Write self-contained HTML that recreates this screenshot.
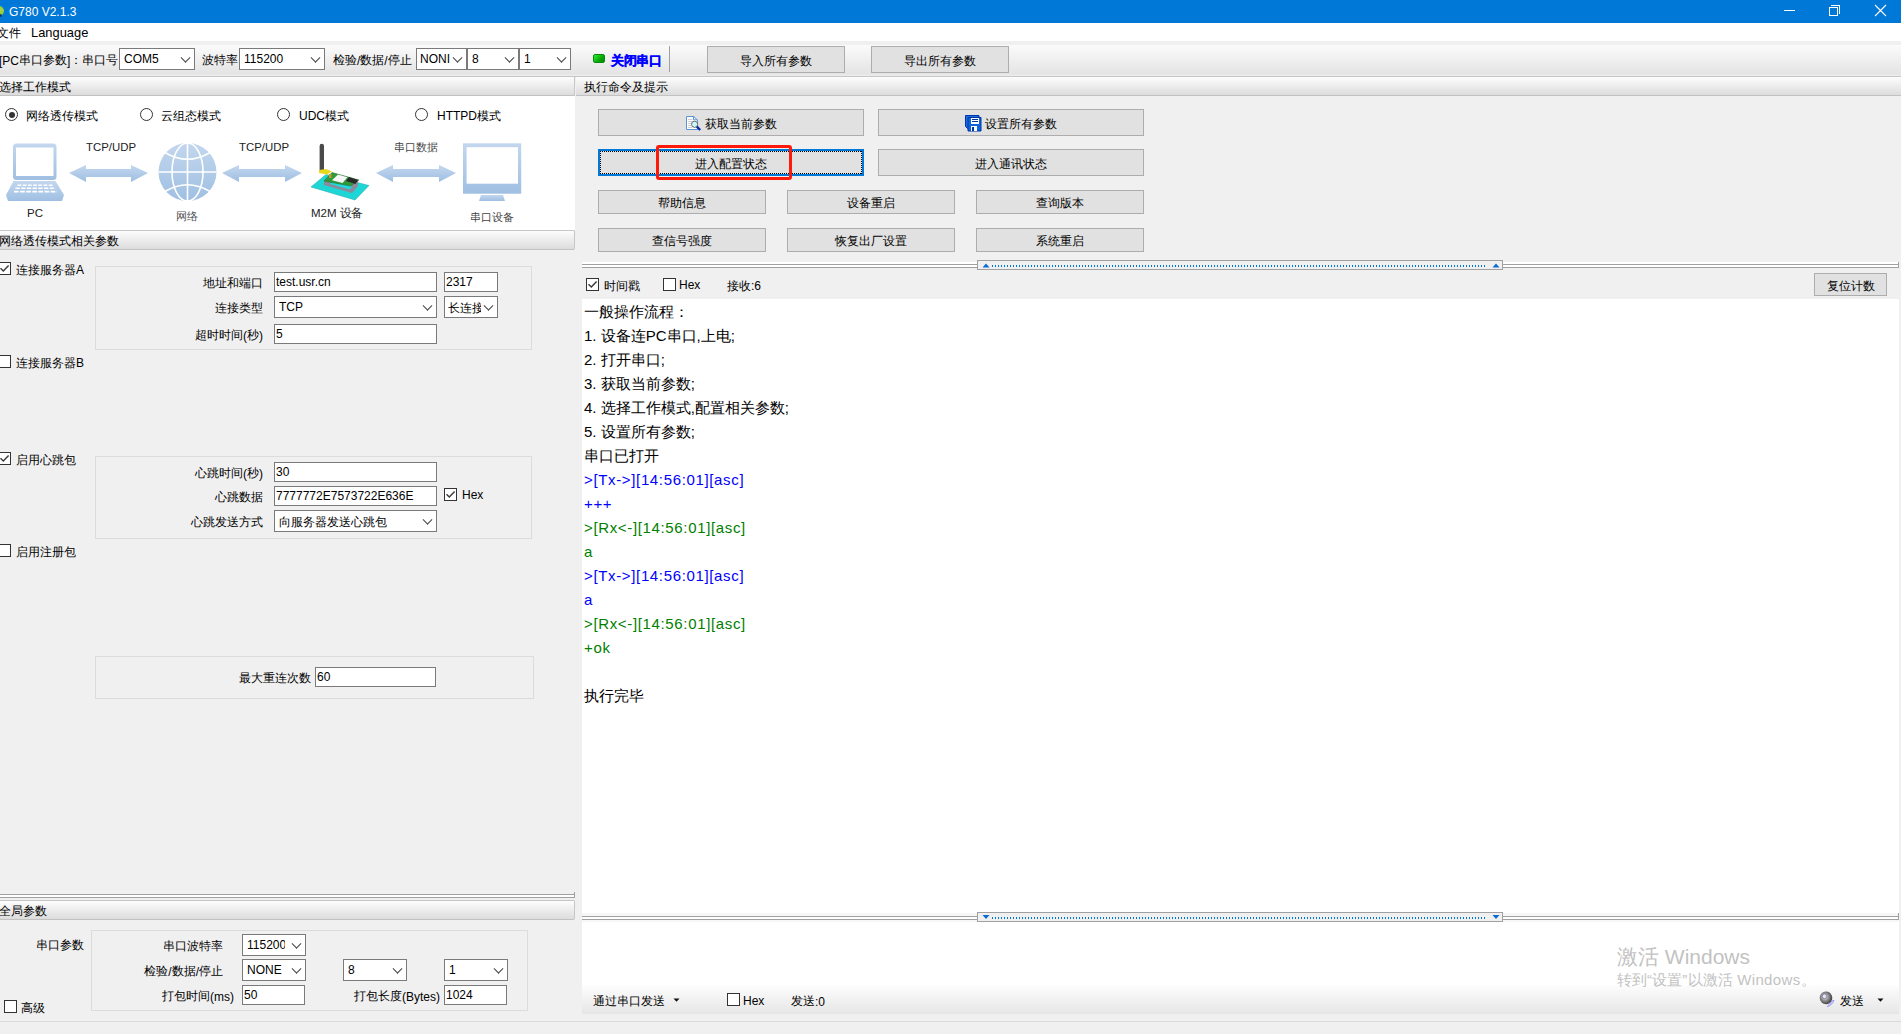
<!DOCTYPE html>
<html><head><meta charset="utf-8">
<style>
*{margin:0;padding:0;box-sizing:border-box}
html,body{width:1901px;height:1034px;overflow:hidden;background:#f0f0f0;font-family:"Liberation Sans",sans-serif;font-size:12px;color:#000}
.a{position:absolute}
.t{position:absolute;white-space:nowrap;line-height:1}
.hdr{position:absolute;height:20px;background:linear-gradient(#fdfdfd,#dcdcdc);border-top:1px solid #c6c6c6;border-bottom:1px solid #c2c2c2;line-height:20px;white-space:nowrap;overflow:hidden}
.btn{position:absolute;background:#e1e1e1;border:1px solid #adadad;padding-top:3px;display:flex;align-items:center;justify-content:center;white-space:nowrap;font-size:12px}
.inp{position:absolute;background:#fff;border:1px solid #7a7a7a;display:flex;align-items:center;padding-left:1px;white-space:nowrap;overflow:hidden;font-size:12px}
.cmb{position:absolute;background:#fff;border:1px solid #7a7a7a;display:flex;align-items:center;padding-left:4px;white-space:nowrap;overflow:hidden;font-size:12px}
.cmb::after{content:"";position:absolute;right:5px;top:50%;width:6px;height:6px;border-right:1.1px solid #444;border-bottom:1.1px solid #444;transform:translateY(-68%) rotate(45deg)}
.chk{position:absolute;width:13px;height:13px;border:1px solid #333;background:#fff}

.rad{position:absolute;width:13px;height:13px;border:1px solid #333;border-radius:50%;background:#fff}
.rad.on::after{content:"";position:absolute;left:2.5px;top:2.5px;width:6px;height:6px;border-radius:50%;background:#333}
.grp{position:absolute;border:1px solid #dcdcdc}
.lbl{position:absolute;white-space:nowrap;padding-top:3px;display:flex;align-items:center;font-size:12px}
.r{justify-content:flex-end}
.txt{position:absolute;left:584px;margin-top:1px;white-space:nowrap;font-size:15px;height:24px;line-height:24px}
.lat{font-size:15px}
.log{letter-spacing:0.65px}
.blue{color:#0000ff}
.green{color:#008000}
i{display:inline-block;width:1em;text-align:center;font-style:normal}
.tofu i{transform:scale(1.4,1.3)}
</style></head><body>

<!-- title bar -->
<div class="a" style="left:0;top:0;width:1901px;height:23px;background:#0078d7"></div>
<div class="a" style="left:-6px;top:6px;width:10px;height:10px;border-radius:50%;background:radial-gradient(circle at 70% 40%,#a6d84a,#6ab814)"></div><div class="a" style="left:-2px;top:14px;width:4px;height:3px;border-radius:50%;background:#0a3a6a"></div>
<div class="t" style="left:9px;top:6px;color:#fff;font-size:12px">G780 V2.1.3</div>
<div class="a" style="left:1784px;top:10px;width:11px;height:1px;background:#fff"></div>
<div class="a" style="left:1829px;top:7px;width:9px;height:9px;border:1px solid #fff"></div>
<div class="a" style="left:1831px;top:5px;width:9px;height:9px;border-top:1px solid #fff;border-right:1px solid #fff"></div>
<svg class="a" style="left:1874px;top:4px" width="13" height="13"><path d="M1 1L12 12M12 1L1 12" stroke="#fff" stroke-width="1.1"/></svg>

<!-- menu bar -->
<div class="a" style="left:0;top:23px;width:1901px;height:18px;background:#fff"></div>
<div class="t" style="left:-3px;top:27px;font-size:12px"><i>文</i><i>件</i></div>
<div class="t" style="left:31px;top:27px;font-size:12.9px">Language</div>

<!-- toolbar -->
<div class="a" style="left:0;top:45px;width:1901px;height:31px;background:linear-gradient(#fbfbfb,#e4e4e4 93%,#efefef)"></div>

<div class="lbl" style="left:-1px;top:48px;height:22px">[PC<i>串</i><i>口</i><i>参</i><i>数</i>]<i>：</i><i>串</i><i>口</i><i>号</i></div>
<div class="cmb" style="left:119px;top:48px;width:76px;height:22px">COM5</div>
<div class="lbl" style="left:202px;top:48px;height:22px"><i>波</i><i>特</i><i>率</i></div>
<div class="cmb" style="left:239px;top:48px;width:86px;height:22px">115200</div>
<div class="lbl" style="left:333px;top:48px;height:22px"><i>检</i><i>验</i>/<i>数</i><i>据</i>/<i>停</i><i>止</i></div>
<div class="cmb" style="left:416px;top:48px;width:51px;height:22px;padding-left:3px">NONI</div>
<div class="cmb" style="left:467px;top:48px;width:52px;height:22px">8</div>
<div class="cmb" style="left:519px;top:48px;width:52px;height:22px">1</div>
<div class="a" style="left:593px;top:54px;width:12px;height:9px;border-radius:2px;background:linear-gradient(135deg,#30f030,#08a808 60%,#068a06);border:1px solid #0a8a0a"></div>
<div class="lbl" style="left:611px;top:48px;height:22px;padding-top:5px;color:#0000ff;font-weight:bold;font-size:12.5px;letter-spacing:0.4px;-webkit-text-stroke:0.35px #0000ff"><i>关</i><i>闭</i><i>串</i><i>口</i></div>
<div class="a" style="left:669px;top:46px;width:1px;height:26px;background:#a0a0a0"></div>
<div class="btn" style="left:707px;top:46px;width:138px;height:27px"><i>导</i><i>入</i><i>所</i><i>有</i><i>参</i><i>数</i></div>
<div class="btn" style="left:871px;top:46px;width:138px;height:27px"><i>导</i><i>出</i><i>所</i><i>有</i><i>参</i><i>数</i></div>

<!-- headers -->
<div class="a" style="left:0;top:76px;width:1901px;height:1px;background:#c6c6c6"></div>
<div class="hdr" style="left:-2px;top:76px;width:577px;padding-left:1px;border-right:1px solid #c6c6c6"><i>选</i><i>择</i><i>工</i><i>作</i><i>模</i><i>式</i></div>
<div class="hdr" style="left:576px;top:76px;width:1325px;padding-left:8px"><i>执</i><i>行</i><i>命</i><i>令</i><i>及</i><i>提</i><i>示</i></div>

<!-- left top white panel -->
<div class="a" style="left:0;top:96px;width:575px;height:134px;background:#fff"></div>
<div class="rad on" style="left:5px;top:108px"></div>
<div class="lbl" style="left:26px;top:105px;height:19px"><i>网</i><i>络</i><i>透</i><i>传</i><i>模</i><i>式</i></div>
<div class="rad" style="left:140px;top:108px"></div>
<div class="lbl" style="left:161px;top:105px;height:19px"><i>云</i><i>组</i><i>态</i><i>模</i><i>式</i></div>
<div class="rad" style="left:277px;top:108px"></div>
<div class="lbl" style="left:299px;top:105px;height:19px">UDC<i>模</i><i>式</i></div>
<div class="rad" style="left:415px;top:108px"></div>
<div class="lbl" style="left:437px;top:105px;height:19px">HTTPD<i>模</i><i>式</i></div>

<!-- diagram -->
<svg class="a" style="left:0;top:130px" width="575" height="100" viewBox="0 130 575 100">
 <defs>
  <linearGradient id="bl" x1="0" y1="0" x2="0" y2="1"><stop offset="0" stop-color="#c3d7ee"/><stop offset="1" stop-color="#9fbfe2"/></linearGradient>
 </defs>
 <!-- laptop -->
 <rect x="13" y="143.5" width="43.5" height="36.5" rx="3.5" fill="url(#bl)"/>
 <rect x="16" y="147.5" width="37.5" height="28.5" fill="#fff"/>
 <rect x="18" y="180" width="3" height="1" fill="#fff"/><rect x="23" y="180" width="23" height="1" fill="#fff"/><rect x="48" y="180" width="3" height="1" fill="#fff"/>
 <path d="M13.5 181 L55.5 181 L64 195 L62 201 L8 201 L6 195 Z" fill="url(#bl)"/>
 <g stroke="#fff" stroke-width="1.6">
  <path d="M17.5 185.3 H53.5" stroke-dasharray="3.8 1.4"/>
  <path d="M15.5 188.3 H55.5" stroke-dasharray="4.3 1.4"/>
  <path d="M14 191.6 H57" stroke-dasharray="4.7 1.4"/>
 </g>
 <!-- arrows -->
 <path id="arr" d="M69 173 L86 165 L86 169 L131 169 L131 165 L148 173 L131 182 L131 177 L86 177 L86 182 Z" fill="url(#bl)"/>
 <path d="M222 173 L239 165 L239 169 L285 169 L285 165 L302 173 L285 182 L285 177 L239 177 L239 182 Z" fill="url(#bl)"/>
 <path d="M376 173 L393 165 L393 169 L439 169 L439 165 L456 173 L439 182 L439 177 L393 177 L393 182 Z" fill="url(#bl)"/>
 <!-- globe -->
 <circle cx="187.5" cy="172" r="29" fill="url(#bl)"/>
 <g stroke="#fff" stroke-width="1.6" fill="none">
  <line x1="187.5" y1="143" x2="187.5" y2="201"/>
  <line x1="158.5" y1="172" x2="216.5" y2="172"/>
  <ellipse cx="187.5" cy="172" rx="15.5" ry="29"/>
  <path d="M165 152.5 Q187.5 166 210 152.5"/>
  <path d="M165 191.5 Q187.5 178 210 191.5"/>
 </g>
 <!-- M2M device -->
 <path d="M311 187 L326 174.5 L369 185.5 L355 200 Z" fill="#1fd6d6" stroke="#17a8a8" stroke-width="0.5"/>
 <path d="M324 181 L324 185 L352 193 L358 186 L358 181 Z" fill="#8a8a9a"/>
 <path d="M330 184 L350 189.5 L352 186 L332 180.5 Z" fill="#20d8e0"/>
 <path d="M324 181 L332 172.5 L359 180 L350.5 186 Z" fill="#2e9a3a" stroke="#1d6a24" stroke-width="0.5"/>
 <path d="M332 180.3 L338 174.6 L347.4 177.2 L342.6 182.9 Z" fill="#f6f6f6"/>
 <path d="M346 181 L349 177 L358 180 L355.5 184 Z" fill="#2a2a2a"/>
 <rect x="319.6" y="143.7" width="4.4" height="28" rx="2.2" fill="#4a4a4a"/>
 <path d="M319 170 L326 169 L332 171.5 L327 174.5 L319 173 Z" fill="#e8d81c"/>
 <rect x="329" y="174" width="2.5" height="4" fill="#c8962a"/>
 <!-- monitor -->
 <rect x="463" y="143.3" width="58.2" height="50.4" fill="url(#bl)"/>
 <rect x="466.6" y="147.2" width="51.4" height="36.5" fill="#fff"/>
 <path d="M481 195 L503 195 L505 201 L479 201 Z" fill="url(#bl)"/>
</svg>
<div class="t" style="left:86px;top:142px;font-size:11.4px;color:#222">TCP/UDP</div>
<div class="t" style="left:239px;top:142px;font-size:11.4px;color:#222">TCP/UDP</div>
<div class="t" style="left:394px;top:142px;font-size:11px;color:#444;letter-spacing:0.6px"><i>串</i><i>口</i><i>数</i><i>据</i></div>
<div class="t" style="left:27px;top:208px;font-size:11.5px;color:#222">PC</div>
<div class="t" style="left:176px;top:211px;font-size:11px;color:#555"><i>网</i><i>络</i></div>
<div class="t" style="left:311px;top:208px;font-size:11.5px;color:#222">M2M <i>设</i><i>备</i></div>
<div class="t" style="left:470px;top:212px;font-size:11px;color:#444;letter-spacing:0.8px"><i>串</i><i>口</i><i>设</i><i>备</i></div>

<div class="hdr" style="left:-2px;top:230px;width:577px;padding-left:1px;border-right:1px solid #c6c6c6;border-radius:0 2px 2px 0"><i>网</i><i>络</i><i>透</i><i>传</i><i>模</i><i>式</i><i>相</i><i>关</i><i>参</i><i>数</i></div>

<!-- server A -->
<div class="chk on" style="left:-2px;top:262px"><svg width="11" height="11" style="position:absolute;left:0;top:0"><path d="M1.5 5.2L4.3 8L9.6 2.4" fill="none" stroke="#3c3c3c" stroke-width="1.45"/></svg></div>
<div class="lbl" style="left:16px;top:259px;height:19px"><i>连</i><i>接</i><i>服</i><i>务</i><i>器</i>A</div>
<div class="grp" style="left:95px;top:266px;width:437px;height:84px"></div>
<div class="lbl r" style="left:150px;top:272px;width:113px;height:20px"><i>地</i><i>址</i><i>和</i><i>端</i><i>口</i></div>
<div class="inp" style="left:274px;top:272px;width:163px;height:20px">test.usr.cn</div>
<div class="inp" style="left:444px;top:272px;width:54px;height:20px">2317</div>
<div class="lbl r" style="left:150px;top:296px;width:113px;height:22px"><i>连</i><i>接</i><i>类</i><i>型</i></div>
<div class="cmb" style="left:274px;top:296px;width:163px;height:22px">TCP</div>
<div class="cmb" style="left:444px;top:296px;width:54px;height:22px;padding-left:3px;padding-top:3px"><span style="display:inline-block;width:33px;overflow:hidden;white-space:nowrap"><i>长</i><i>连</i><i>接</i></span></div>
<div class="lbl r" style="left:150px;top:324px;width:113px;height:20px"><i>超</i><i>时</i><i>时</i><i>间</i>(<i>秒</i>)</div>
<div class="inp" style="left:274px;top:324px;width:163px;height:20px">5</div>

<div class="chk" style="left:-2px;top:355px"></div>
<div class="lbl" style="left:16px;top:352px;height:19px"><i>连</i><i>接</i><i>服</i><i>务</i><i>器</i>B</div>

<!-- heartbeat -->
<div class="chk on" style="left:-2px;top:452px"><svg width="11" height="11" style="position:absolute;left:0;top:0"><path d="M1.5 5.2L4.3 8L9.6 2.4" fill="none" stroke="#3c3c3c" stroke-width="1.45"/></svg></div>
<div class="lbl" style="left:16px;top:449px;height:19px"><i>启</i><i>用</i><i>心</i><i>跳</i><i>包</i></div>
<div class="grp" style="left:95px;top:456px;width:437px;height:83px"></div>
<div class="lbl r" style="left:150px;top:462px;width:113px;height:20px"><i>心</i><i>跳</i><i>时</i><i>间</i>(<i>秒</i>)</div>
<div class="inp" style="left:274px;top:462px;width:163px;height:20px">30</div>
<div class="lbl r" style="left:150px;top:486px;width:113px;height:20px"><i>心</i><i>跳</i><i>数</i><i>据</i></div>
<div class="inp" style="left:274px;top:486px;width:163px;height:20px">7777772E7573722E636E</div>
<div class="chk on" style="left:444px;top:488px"><svg width="11" height="11" style="position:absolute;left:0;top:0"><path d="M1.5 5.2L4.3 8L9.6 2.4" fill="none" stroke="#3c3c3c" stroke-width="1.45"/></svg></div>
<div class="lbl" style="left:462px;top:485px;height:19px;padding-top:1px">Hex</div>
<div class="lbl r" style="left:150px;top:510px;width:113px;height:22px"><i>心</i><i>跳</i><i>发</i><i>送</i><i>方</i><i>式</i></div>
<div class="cmb" style="left:274px;top:510px;width:163px;height:22px;padding-top:3px"><i>向</i><i>服</i><i>务</i><i>器</i><i>发</i><i>送</i><i>心</i><i>跳</i><i>包</i></div>

<div class="chk" style="left:-2px;top:544px"></div>
<div class="lbl" style="left:16px;top:541px;height:19px"><i>启</i><i>用</i><i>注</i><i>册</i><i>包</i></div>

<div class="grp" style="left:95px;top:656px;width:439px;height:43px"></div>
<div class="lbl r" style="left:200px;top:667px;width:111px;height:20px"><i>最</i><i>大</i><i>重</i><i>连</i><i>次</i><i>数</i></div>
<div class="inp" style="left:315px;top:667px;width:121px;height:20px">60</div>

<!-- left splitter -->
<div class="a" style="left:0;top:892px;width:575px;height:6px;background:#fff;border-top:2px solid #f0f0f0"></div>
<div class="a" style="left:0;top:894px;width:575px;height:1px;background:#a0a0a0"></div>
<div class="a" style="left:0;top:897px;width:575px;height:1px;background:#a0a0a0"></div>
<div class="a" style="left:574px;top:892px;width:1px;height:6px;background:#a0a0a0"></div>

<div class="hdr" style="left:-2px;top:900px;width:577px;padding-left:1px;border-right:1px solid #c6c6c6;border-radius:0 2px 2px 0"><i>全</i><i>局</i><i>参</i><i>数</i></div>

<!-- global -->
<div class="lbl" style="left:36px;top:934px;height:20px"><i>串</i><i>口</i><i>参</i><i>数</i></div>
<div class="grp" style="left:91px;top:930px;width:437px;height:81px"></div>
<div class="lbl r" style="left:110px;top:934px;width:113px;height:22px"><i>串</i><i>口</i><i>波</i><i>特</i><i>率</i></div>
<div class="cmb" style="left:242px;top:934px;width:64px;height:22px"><span style="display:inline-block;width:38px;overflow:hidden;white-space:nowrap">115200</span></div>
<div class="lbl r" style="left:110px;top:959px;width:113px;height:22px"><i>检</i><i>验</i>/<i>数</i><i>据</i>/<i>停</i><i>止</i></div>
<div class="cmb" style="left:242px;top:959px;width:64px;height:22px">NONE</div>
<div class="cmb" style="left:343px;top:959px;width:64px;height:22px">8</div>
<div class="cmb" style="left:444px;top:959px;width:64px;height:22px">1</div>
<div class="lbl r" style="left:110px;top:985px;width:124px;height:20px"><i>打</i><i>包</i><i>时</i><i>间</i>(ms)</div>
<div class="inp" style="left:242px;top:985px;width:63px;height:20px">50</div>
<div class="lbl r" style="left:320px;top:985px;width:120px;height:20px"><i>打</i><i>包</i><i>长</i><i>度</i>(Bytes)</div>
<div class="inp" style="left:444px;top:985px;width:63px;height:20px">1024</div>
<div class="chk" style="left:4px;top:1000px"></div>
<div class="lbl" style="left:21px;top:997px;height:19px"><i>高</i><i>级</i></div>

<!-- status line -->
<div class="a" style="left:0;top:1021px;width:1901px;height:1px;background:#dadada"></div>

<!-- right buttons -->
<div class="btn" style="left:598px;top:109px;width:266px;height:27px;padding-left:19px"><i>获</i><i>取</i><i>当</i><i>前</i><i>参</i><i>数</i></div>
<svg class="a" style="left:685px;top:115px" width="17" height="17" viewBox="0 0 17 17">
 <path d="M1.5 1.5H8.8L12.5 5.2V14.5H1.5Z" fill="#fff" stroke="#5b95d5" stroke-width="1"/>
 <path d="M8.5 1.5V4.8H12.5" fill="none" stroke="#5b95d5" stroke-width="1"/>
 <g fill="#d0d0d0"><rect x="3" y="4" width="4.5" height="1"/><rect x="3" y="6" width="5" height="1"/><rect x="3" y="8" width="3" height="1"/><rect x="3" y="10" width="3" height="1"/><rect x="3" y="12" width="4" height="1"/></g>
 <circle cx="9.6" cy="9.3" r="3.1" fill="#c8f8f8" stroke="#6a6a6a" stroke-width="1"/>
 <path d="M11.8 11.6L15.2 15" stroke="#0a2aa8" stroke-width="2.4" stroke-linecap="butt"/>
</svg>
<div class="btn" style="left:878px;top:109px;width:266px;height:27px;padding-left:19px"><i>设</i><i>置</i><i>所</i><i>有</i><i>参</i><i>数</i></div>
<svg class="a" style="left:965px;top:115px" width="17" height="17" viewBox="0 0 17 17">
 <path d="M0.5 0.5H14V13L2.5 13.5L0.5 11.5Z" fill="#1a6ee0" stroke="#0032a8" stroke-width="1"/>
 <path d="M3 2.5H16V16H3Z" fill="#0c66d8" stroke="#0032a8" stroke-width="1"/>
 <rect x="6" y="3" width="8" height="6" fill="#fff"/>
 <rect x="7" y="4" width="6" height="1" fill="#0032a8"/><rect x="7" y="6" width="6" height="1" fill="#0032a8"/>
 <rect x="6" y="11" width="6" height="5" fill="#fff"/>
 <rect x="7" y="12" width="2" height="4" fill="#0032a8"/>
</svg>
<div class="btn" style="left:598px;top:149px;width:266px;height:27px;border:2px solid #0078d7"><i>进</i><i>入</i><i>配</i><i>置</i><i>状</i><i>态</i></div>
<div class="a" style="left:600px;top:151px;width:262px;height:1px;background:repeating-linear-gradient(90deg,#000 0 1px,transparent 1px 2px)"></div>
<div class="a" style="left:600px;top:173px;width:262px;height:1px;background:repeating-linear-gradient(90deg,#000 0 1px,transparent 1px 2px)"></div>
<div class="a" style="left:600px;top:151px;width:1px;height:23px;background:repeating-linear-gradient(180deg,#000 0 1px,transparent 1px 2px)"></div>
<div class="a" style="left:861px;top:151px;width:1px;height:23px;background:repeating-linear-gradient(180deg,#000 0 1px,transparent 1px 2px)"></div>
<div class="btn" style="left:878px;top:149px;width:266px;height:27px"><i>进</i><i>入</i><i>通</i><i>讯</i><i>状</i><i>态</i></div>
<div class="btn" style="left:598px;top:190px;width:168px;height:24px"><i>帮</i><i>助</i><i>信</i><i>息</i></div>
<div class="btn" style="left:787px;top:190px;width:168px;height:24px"><i>设</i><i>备</i><i>重</i><i>启</i></div>
<div class="btn" style="left:976px;top:190px;width:168px;height:24px"><i>查</i><i>询</i><i>版</i><i>本</i></div>
<div class="btn" style="left:598px;top:228px;width:168px;height:24px"><i>查</i><i>信</i><i>号</i><i>强</i><i>度</i></div>
<div class="btn" style="left:787px;top:228px;width:168px;height:24px"><i>恢</i><i>复</i><i>出</i><i>厂</i><i>设</i><i>置</i></div>
<div class="btn" style="left:976px;top:228px;width:168px;height:24px"><i>系</i><i>统</i><i>重</i><i>启</i></div>
<div class="a" style="left:656px;top:145px;width:136px;height:35px;border:3px solid #fe1a0a;border-radius:3px"></div>

<!-- top splitter -->
<div class="a" style="left:582px;top:262px;width:1317px;height:5px;background:#fff"></div>
<div class="a" style="left:582px;top:264px;width:1317px;height:1px;background:#a0a0a0"></div>
<div class="a" style="left:582px;top:267px;width:1317px;height:1px;background:#a0a0a0"></div>
<div class="a" style="left:1898px;top:262px;width:1px;height:6px;background:#a0a0a0"></div>
<div class="a" style="left:977px;top:260px;width:526px;height:10px;background:#f0f0f0;border:1px solid #a0a0a0"></div>
<div class="a" style="left:992px;top:265px;width:493px;height:1px;background-image:linear-gradient(90deg,#0078d7 1px,transparent 1px);background-size:3px 1px;height:2px"></div>
<svg class="a" style="left:982px;top:262px" width="8" height="6"><path d="M0.5 5.5L4 1.5L7.5 5.5Z" fill="#0a6ad6"/></svg>
<svg class="a" style="left:1492px;top:262px" width="8" height="6"><path d="M0.5 5.5L4 1.5L7.5 5.5Z" fill="#0a6ad6"/></svg>

<!-- receive toolbar -->
<div class="chk on" style="left:586px;top:278px"><svg width="11" height="11" style="position:absolute;left:0;top:0"><path d="M1.5 5.2L4.3 8L9.6 2.4" fill="none" stroke="#3c3c3c" stroke-width="1.45"/></svg></div>
<div class="lbl" style="left:604px;top:275px;height:19px"><i>时</i><i>间</i><i>戳</i></div>
<div class="chk" style="left:663px;top:278px"></div>
<div class="lbl" style="left:679px;top:275px;height:19px;padding-top:1px">Hex</div>
<div class="lbl" style="left:727px;top:275px;height:19px"><i>接</i><i>收</i>:6</div>
<div class="btn" style="left:1814px;top:273px;width:73px;height:23px"><i>复</i><i>位</i><i>计</i><i>数</i></div>

<!-- receive text area -->
<div class="a" style="left:582px;top:299px;width:1317px;height:614px;background:#fff"></div>
<div class="txt" style="top:299px"><i>一</i><i>般</i><i>操</i><i>作</i><i>流</i><i>程</i><i>：</i></div>
<div class="txt" style="top:323px"><span class="lat">1.</span> <i>设</i><i>备</i><i>连</i><span class="lat">PC</span><i>串</i><i>口</i><span class="lat">,</span><i>上</i><i>电</i><span class="lat">;</span></div>
<div class="txt" style="top:347px"><span class="lat">2.</span> <i>打</i><i>开</i><i>串</i><i>口</i><span class="lat">;</span></div>
<div class="txt" style="top:371px"><span class="lat">3.</span> <i>获</i><i>取</i><i>当</i><i>前</i><i>参</i><i>数</i><span class="lat">;</span></div>
<div class="txt" style="top:395px"><span class="lat">4.</span> <i>选</i><i>择</i><i>工</i><i>作</i><i>模</i><i>式</i><span class="lat">,</span><i>配</i><i>置</i><i>相</i><i>关</i><i>参</i><i>数</i><span class="lat">;</span></div>
<div class="txt" style="top:419px"><span class="lat">5.</span> <i>设</i><i>置</i><i>所</i><i>有</i><i>参</i><i>数</i><span class="lat">;</span></div>
<div class="txt" style="top:443px"><i>串</i><i>口</i><i>已</i><i>打</i><i>开</i></div>
<div class="txt lat log blue" style="top:467px">&gt;[Tx-&gt;][14:56:01][asc]</div>
<div class="txt lat log blue" style="top:491px">+++</div>
<div class="txt lat log green" style="top:515px">&gt;[Rx&lt;-][14:56:01][asc]</div>
<div class="txt lat log green" style="top:539px">a</div>
<div class="txt lat log blue" style="top:563px">&gt;[Tx-&gt;][14:56:01][asc]</div>
<div class="txt lat log blue" style="top:587px">a</div>
<div class="txt lat log green" style="top:611px">&gt;[Rx&lt;-][14:56:01][asc]</div>
<div class="txt lat log green" style="top:635px">+ok</div>
<div class="txt" style="top:683px"><i>执</i><i>行</i><i>完</i><i>毕</i></div>

<!-- bottom splitter -->
<div class="a" style="left:582px;top:913px;width:1317px;height:9px;background:#f7f7f7"></div>
<div class="a" style="left:582px;top:916px;width:1317px;height:4px;background:#fff;border-top:1px solid #a0a0a0;border-bottom:1px solid #a0a0a0"></div>
<div class="a" style="left:1898px;top:913px;width:1px;height:7px;background:#a0a0a0"></div>
<div class="a" style="left:977px;top:912px;width:526px;height:10px;background:#f0f0f0;border:1px solid #a0a0a0"></div>
<div class="a" style="left:992px;top:917px;width:493px;height:2px;background-image:linear-gradient(90deg,#0078d7 1px,transparent 1px);background-size:3px 1px"></div>
<svg class="a" style="left:982px;top:914px" width="8" height="6"><path d="M0.5 1L7.5 1L4 5Z" fill="#0a6ad6"/></svg>
<svg class="a" style="left:1492px;top:914px" width="8" height="6"><path d="M0.5 1L7.5 1L4 5Z" fill="#0a6ad6"/></svg>

<!-- send area -->
<div class="a" style="left:582px;top:922px;width:1317px;height:63px;background:#fff"></div>
<div class="a" style="left:582px;top:985px;width:1317px;height:29px;background:linear-gradient(#fdfdfd,#e6e6e6)"></div>
<div class="t" style="left:1617px;top:946px;font-size:21px;color:#c2c2c2"><i>激</i><i>活</i> Windows</div>
<div class="t" style="left:1617px;top:972px;font-size:15px;color:#c2c2c2;letter-spacing:0.35px"><i>转</i><i>到</i>“<i>设</i><i>置</i>”<i>以</i><i>激</i><i>活</i> Windows<i>。</i></div>
<div class="lbl" style="left:593px;top:990px;height:20px"><i>通</i><i>过</i><i>串</i><i>口</i><i>发</i><i>送</i></div>
<svg class="a" style="left:673px;top:998px" width="7" height="5"><path d="M0.5 0.5L6.5 0.5L3.5 3.8Z" fill="#111"/></svg>
<div class="chk" style="left:727px;top:993px"></div>
<div class="lbl" style="left:743px;top:990px;height:20px;padding-top:1px">Hex</div>
<div class="lbl" style="left:791px;top:990px;height:20px"><i>发</i><i>送</i>:0</div>
<svg class="a" style="left:1818px;top:990px" width="20" height="18" viewBox="0 0 20 18">
 <defs><radialGradient id="spk" cx="0.45" cy="0.4" r="0.6"><stop offset="0" stop-color="#f4f4f4"/><stop offset="0.45" stop-color="#9a9a9a"/><stop offset="1" stop-color="#3a3a3a"/></radialGradient></defs>
 <ellipse cx="8" cy="7.8" rx="6.2" ry="6.4" fill="url(#spk)" transform="rotate(-25 8 7.8)"/>
 <ellipse cx="6.5" cy="6.3" rx="2.3" ry="2.3" fill="#e6e6e6" stroke="#5a5aa0" stroke-width="0.6"/>
 <path d="M9 16.5 Q14 15.5 16 10" stroke="#8a8af0" fill="none" stroke-width="1"/>
 <path d="M10.5 14.5 Q13.5 13 14.5 10" stroke="#8a8af0" fill="none" stroke-width="1"/>
</svg>
<div class="lbl" style="left:1840px;top:990px;height:20px"><i>发</i><i>送</i></div>
<svg class="a" style="left:1877px;top:998px" width="7" height="5"><path d="M0.5 0.5L6.5 0.5L3.5 3.8Z" fill="#111"/></svg>

<script>
(function(){var s=document.createElement('span');s.style.cssText='position:absolute;left:0;top:0;font-size:100px;font-family:"Liberation Sans";visibility:hidden;white-space:nowrap';s.textContent='\u4e00\u4e00';document.body.appendChild(s);var w=s.getBoundingClientRect().width;document.body.removeChild(s);if(w<180){document.documentElement.className+=' tofu';}})();
</script>
</body></html>
